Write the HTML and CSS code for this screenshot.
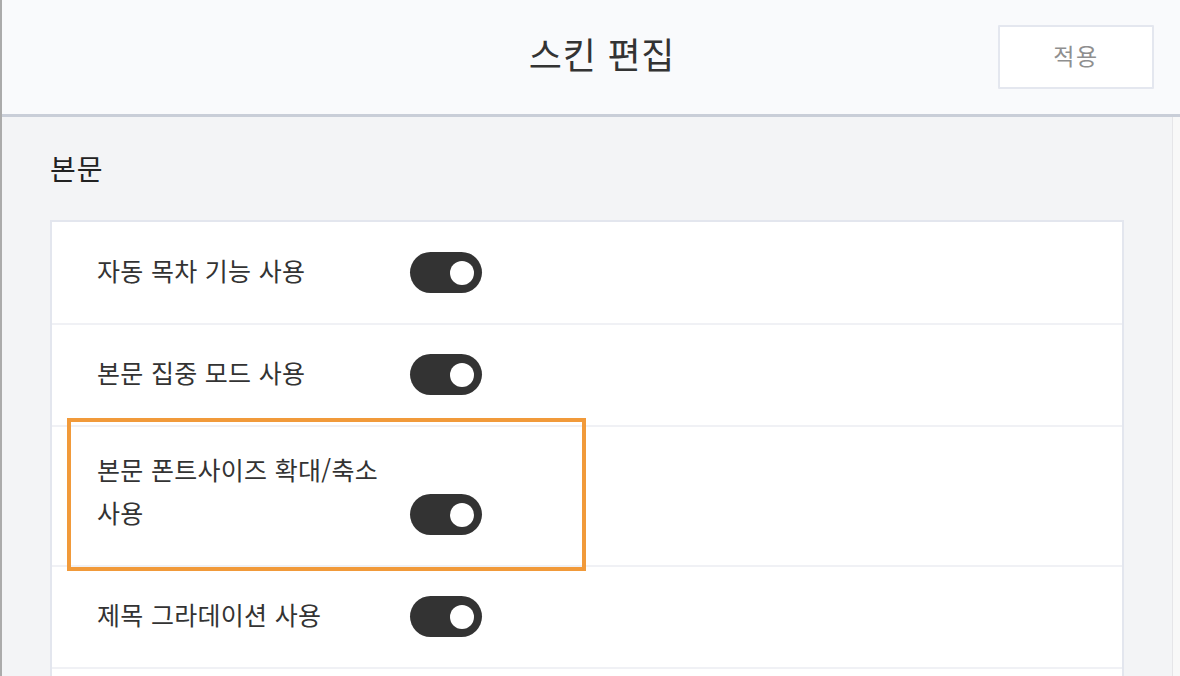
FILE: index.html
```html
<!DOCTYPE html>
<html lang="ko">
<head>
<meta charset="utf-8">
<title>스킨 편집</title>
<link rel="stylesheet" href="styles.css">
</head>
<body>
<div class="app">
  <header class="header">
    <div class="header-side"></div>
    <h1 class="title">스킨 편집</h1>
    <div class="header-side header-actions">
      <button class="apply-btn" type="button">적용</button>
    </div>
  </header>
  <div class="body">
    <main class="content">
      <h2 class="section-title">본문</h2>
      <div class="card">
        <div class="row">
          <div class="label">자동 목차 기능 사용</div>
          <span class="toggle on"></span>
        </div>
        <div class="row">
          <div class="label">본문 집중 모드 사용</div>
          <span class="toggle on"></span>
        </div>
        <div class="row row-highlight">
          <div class="label">본문 폰트사이즈 확대/축소 사용</div>
          <span class="toggle on"></span>
          <span class="highlight"></span>
        </div>
        <div class="row">
          <div class="label">제목 그라데이션 사용</div>
          <span class="toggle on"></span>
        </div>
        <div class="card-tail"></div>
      </div>
    </main>
    <div class="scrollbar"></div>
  </div>
</div>
</body>
</html>
```

FILE: styles.css
```css
* {
  box-sizing: border-box;
}

html, body {
  margin: 0;
  padding: 0;
  height: 100%;
  overflow: hidden;
}

body {
  font-family: "Noto Sans CJK KR", "Noto Sans", sans-serif;
  color: #333333;
  background: #f3f4f6;
}

.app {
  height: 676px;
  border-left: 2px solid #ababab;
  display: flex;
  flex-direction: column;
  overflow: hidden;
}

.header {
  height: 117px;
  flex: none;
  background: #f9fafc;
  border-bottom: 3px solid #c9ced8;
  display: grid;
  grid-template-columns: 1fr auto 1fr;
  align-items: center;
  padding-left: 22px;
}

.title {
  margin: 0;
  padding-bottom: 8px;
  font-size: 36px;
  font-weight: 400;
  color: #333333;
  line-height: 46px;
  letter-spacing: 0.8px;
}

.header-actions {
  display: flex;
  justify-content: flex-end;
  padding-right: 26px;
}

.apply-btn {
  width: 156px;
  height: 64px;
  background: #ffffff;
  border: 2px solid #e4e7ef;
  border-radius: 1px;
  font-family: "Noto Sans CJK KR", "Noto Sans", sans-serif;
  font-size: 23px;
  letter-spacing: 1.5px;
  color: #8f8f8f;
  padding: 0 0 4px;
}

.body {
  flex: 1;
  display: flex;
  min-height: 0;
}

.content {
  flex: 1;
  background: #f3f4f6;
  padding: 32px 48px 0 48px;
  overflow: hidden;
}

.scrollbar {
  width: 8px;
  flex: none;
  background: #f8f8f8;
  border-left: 1px solid #e5e5e8;
}

.section-title {
  margin: 0 0 32px;
  font-size: 28px;
  font-weight: 400;
  line-height: 39px;
  letter-spacing: 1px;
  color: #222222;
}

.card {
  background: #ffffff;
  border: 2px solid #e3e6ee;
  border-bottom: 0;
}

.row {
  position: relative;
  display: flex;
  align-items: flex-end;
  min-height: 102px;
  padding: 21px 0 31px 45px;
  border-bottom: 2px solid #f0f1f5;
}

.row:first-child {
  min-height: 103px;
}

.label {
  width: 313px;
  flex: none;
  padding-right: 24px;
  font-size: 25px;
  line-height: 43px;
  color: #333333;
  letter-spacing: 0.3px;
}

.toggle {
  position: relative;
  flex: none;
  width: 72px;
  height: 41px;
  border-radius: 21px;
  background: #333333;
  margin-bottom: -1px;
}

.toggle.on::after {
  content: "";
  position: absolute;
  right: 8px;
  top: 50%;
  width: 24px;
  height: 24px;
  margin-top: -12px;
  border-radius: 50%;
  background: #ffffff;
}

.highlight {
  position: absolute;
  top: -9px;
  left: 15px;
  width: 519px;
  height: 153px;
  border: 4px solid #f19a3a;
  pointer-events: none;
}

.card-tail {
  height: 7px;
}
```
